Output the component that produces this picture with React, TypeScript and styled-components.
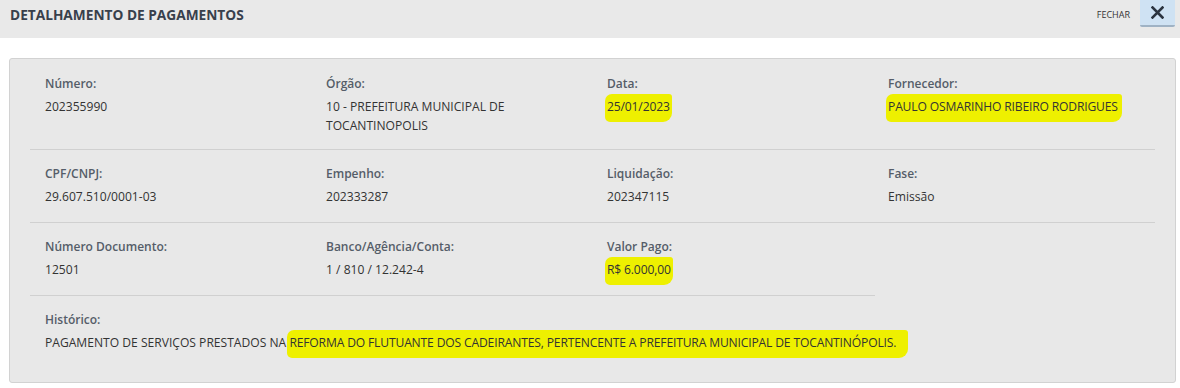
import React from "react";
import styled, { createGlobalStyle } from "styled-components";

const GlobalStyle = createGlobalStyle`
  html, body {
    margin: 0;
    padding: 0;
    background: #fff;
    font-family: "Open Sans", "Liberation Sans", sans-serif;
  }
`;

const Page = styled.div`
  width: 1180px;
  height: 388px;
  background: #fff;
`;

const Header = styled.header`
  height: 38px;
  background: #e9e9e9;
  display: flex;
  align-items: flex-start;
  justify-content: space-between;
`;

const Title = styled.h1`
  margin: 0;
  padding: 5px 0 0 10px;
  font-size: 13.7px;
  font-weight: 700;
  color: #38404c;
`;

const Actions = styled.div`
  display: flex;
  align-items: flex-start;
  gap: 10px;
  padding-right: 5px;
`;

const CloseLabel = styled.span`
  font-size: 9px;
  color: #333;
  padding-top: 8px;
`;

const CloseButton = styled.button`
  width: 35px;
  height: 27px;
  border: 0;
  border-bottom: 2px solid #9fb2c4;
  border-radius: 0 0 2px 2px;
  background: #cfe2f3;
  display: flex;
  align-items: center;
  justify-content: center;
  padding: 0;
`;

const Panel = styled.section`
  margin: 20px 4px 0 9px;
  height: 325px;
  box-sizing: border-box;
  background: #e8e8e8;
  border: 1px solid #d2d2d2;
  border-radius: 3px;
  padding: 15px 20px 0 20px;
`;

const Row = styled.div<{ $divider?: "full" | "partial" }>`
  display: grid;
  grid-template-columns: 281px 281px 281px 1fr;
  padding: 0 0 0 15px;
  height: ${(p) => (p.$divider ? "73px" : "auto")};
  box-sizing: border-box;
  position: relative;
  ${(p) => (p.$divider === "full" ? "border-bottom: 1px solid #d0d0d0;" : "")}
  ${(p) =>
    p.$divider === "partial"
      ? `&::after {
          content: "";
          position: absolute;
          left: 0;
          bottom: 0;
          width: 845px;
          border-bottom: 1px solid #d0d0d0;
        }`
      : ""}
  & + & {
    padding-top: 14px;
  }
`;

const TallRow = styled(Row)`
  height: 76px;
`;

const Field = styled.div``;

const Label = styled.div`
  font-size: 12px;
  font-weight: 600;
  color: #555d68;
  line-height: 20px;
`;

const Value = styled.div`
  font-size: 12.1px;
  color: #333;
  line-height: 19px;
  margin-top: 3px;
  width: 220px;
`;

const WideValue = styled(Value)`
  width: auto;
`;

const Mark = styled.span<{ $pad?: number }>`
  background: #eef000;
  padding: 4px ${(p) => p.$pad ?? 2}px 7px 2px;
  margin-left: -2px;
  border-radius: 7px 3px 9px 5px;
  letter-spacing: -0.15px;
`;

export default function App() {
  return (
    <Page>
      <GlobalStyle />
      <Header>
        <Title>DETALHAMENTO DE PAGAMENTOS</Title>
        <Actions>
          <CloseLabel>FECHAR</CloseLabel>
          <CloseButton aria-label="Fechar">
            <svg width="13" height="13" viewBox="0 0 13 13">
              <path
                d="M1.5 1.5 L11.5 11.5 M11.5 1.5 L1.5 11.5"
                stroke="#2c3440"
                strokeWidth="2.6"
                strokeLinecap="square"
              />
            </svg>
          </CloseButton>
        </Actions>
      </Header>
      <Panel>
        <TallRow $divider="full">
          <Field>
            <Label>Número:</Label>
            <Value>202355990</Value>
          </Field>
          <Field>
            <Label>Órgão:</Label>
            <Value>10 - PREFEITURA MUNICIPAL DE TOCANTINOPOLIS</Value>
          </Field>
          <Field>
            <Label>Data:</Label>
            <Value>
              <Mark>25/01/2023</Mark>
            </Value>
          </Field>
          <Field>
            <Label>Fornecedor:</Label>
            <WideValue>
              <Mark $pad={4}>PAULO OSMARINHO RIBEIRO RODRIGUES</Mark>
            </WideValue>
          </Field>
        </TallRow>
        <Row $divider="full">
          <Field>
            <Label>CPF/CNPJ:</Label>
            <Value>29.607.510/0001-03</Value>
          </Field>
          <Field>
            <Label>Empenho:</Label>
            <Value>202333287</Value>
          </Field>
          <Field>
            <Label>Liquidação:</Label>
            <Value>202347115</Value>
          </Field>
          <Field>
            <Label>Fase:</Label>
            <Value>Emissão</Value>
          </Field>
        </Row>
        <Row $divider="partial">
          <Field>
            <Label>Número Documento:</Label>
            <Value>12501</Value>
          </Field>
          <Field>
            <Label>Banco/Agência/Conta:</Label>
            <Value>1 / 810 / 12.242-4</Value>
          </Field>
          <Field>
            <Label>Valor Pago:</Label>
            <Value>
              <Mark>R$ 6.000,00</Mark>
            </Value>
          </Field>
        </Row>
        <Row>
          <Field style={{ gridColumn: "1 / -1" }}>
            <Label>Histórico:</Label>
            <WideValue>
              PAGAMENTO DE SERVIÇOS PRESTADOS NA{" "}
              <Mark $pad={12}>
                REFORMA DO FLUTUANTE DOS CADEIRANTES, PERTENCENTE A PREFEITURA
                MUNICIPAL DE TOCANTINÓPOLIS.
              </Mark>
            </WideValue>
          </Field>
        </Row>
      </Panel>
    </Page>
  );
}
